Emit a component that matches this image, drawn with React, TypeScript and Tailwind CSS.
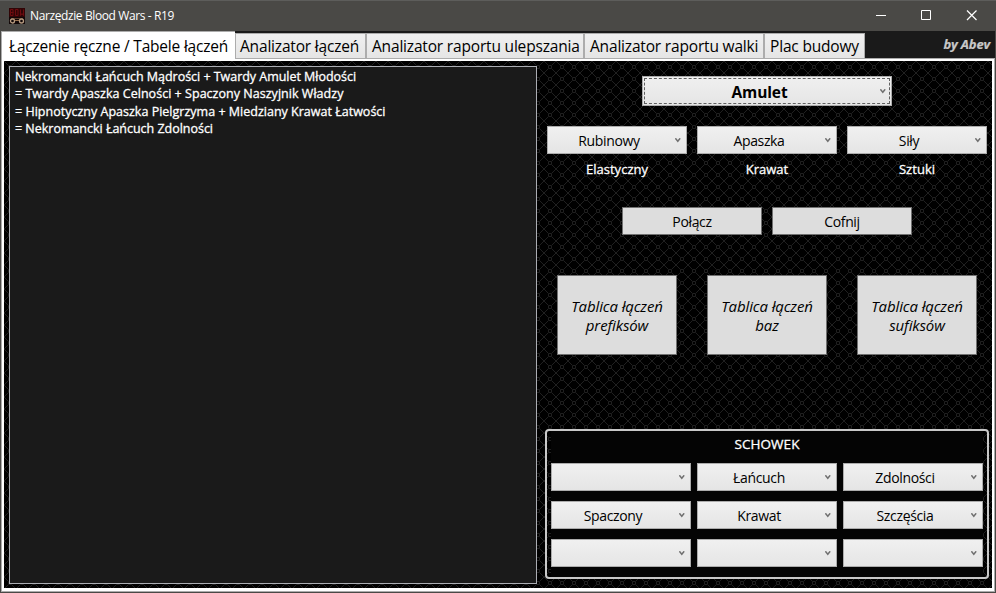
import React from "react";

function Chevron() {
  return (
    <svg className="block h-[5px] w-[6px] shrink-0" viewBox="0 0 6 5">
      <path d="M0.4 0.3 L2.8 3.3 L5.2 0.3" fill="none" stroke="#707070" strokeWidth="1.5" />
    </svg>
  );
}

function Combo({ label }: { label?: string }) {
  return (
    <div className="flex h-7 w-[140px] border border-[#acacac] bg-linear-to-b from-[#f0f0f0] to-[#e5e5e5]">
      <div className="flex flex-1 items-center justify-center pt-[2px] pr-px text-[14px] leading-5 tracking-[-0.35px] text-black">
        {label}
      </div>
      <div className="w-[15px] pt-[11px] pl-1">
        <Chevron />
      </div>
    </div>
  );
}

function PushButton({ children }: { children: React.ReactNode }) {
  return (
    <button className="h-7 w-[140px] border border-[#707070] bg-[#dddddd] pt-px text-[14px] leading-5 tracking-[-0.35px] text-black">
      {children}
    </button>
  );
}

function TableButton({ second }: { second: string }) {
  return (
    <button className="h-20 w-[120px] border border-[#707070] bg-[#dddddd] pt-[2px] text-[15px] leading-[19px] tracking-[-0.12px] text-black italic">
      Tablica łączeń
      <br />
      {second}
    </button>
  );
}

const tabs = [
  { label: "Analizator łączeń", box: "w-[131px] pl-[4px]" },
  { label: "Analizator raportu ulepszania", box: "w-[218px] pl-[5px]" },
  { label: "Analizator raportu walki", box: "w-[180px] pl-[5px]" },
  { label: "Plac budowy", box: "w-[101px] pl-[5px]" },
];

const log = [
  { text: "Nekromancki Łańcuch Mądrości + Twardy Amulet Młodości", track: "tracking-[-0.03px]" },
  { text: "= Twardy Apaszka Celności + Spaczony Naszyjnik Władzy", track: "tracking-[0.03px]" },
  { text: "= Hipnotyczny Apaszka Pielgrzyma + Miedziany Krawat Łatwości", track: "tracking-[0.01px]" },
  { text: "= Nekromancki Łańcuch Zdolności", track: "tracking-[-0.02px]" },
];

export default function App() {
  return (
    <div className="flex h-[593px] w-[996px] flex-col overflow-hidden bg-[#4a4946] font-['Open_Sans','Noto_Sans',sans-serif] text-black">
      <header className="flex h-[31px] shrink-0 items-center border-t border-[#5d5d5b] pl-[9px] text-white">
        <svg className="h-4 w-4" viewBox="0 0 16 16">
          <rect width="16" height="16" fill="#120808" />
          <rect width="16" height="9" fill="#300506" />
          <path d="M1.500 1.500h2.500v6h-2.500zM1.500 4.500h3M6.500 1.500h2.500v6h-2.500zM11.500 1.500v6l1.500-2 1.500 2v-6" fill="none" stroke="#6e0c0f" />
          <path d="M2 10.500h12" stroke="#5d3d2a" />
          <circle cx="3.500" cy="13" r="2" fill="none" stroke="#b69b80" strokeWidth="1.300" />
          <circle cx="12.500" cy="13" r="2" fill="none" stroke="#b69b80" strokeWidth="1.300" />
          <path d="M6 12.500h4" stroke="#97714f" />
        </svg>
        <span className="ml-[5px] flex-1 text-[12px] tracking-[-0.39px] whitespace-nowrap">Narzędzie Blood Wars - R19</span>
        <svg className="h-[30px] w-[120px]" viewBox="0 0 120 30" fill="none" stroke="white">
          <path d="M0 14.500h10M45.500 9.500h9v9h-9z" />
          <path d="M91 9.500l9.500 9.500M100.500 9.500l-9.500 9.500" strokeWidth="1.200" />
        </svg>
      </header>
      <div className="mr-px ml-px flex h-[28px] shrink-0 bg-[#1a1a1a]">
        <div className="h-[28px] w-[234px] border-t border-l border-[#acacac] bg-white pt-[3px] pl-[7px] text-[15.5px] leading-[22px] tracking-[-0.2px] whitespace-nowrap">
          Łączenie ręczne / Tabele łączeń
        </div>
        <div className="flex flex-1 border-b border-[#acacac] pt-[2px]">
          {tabs.map((t) => (
            <div
              key={t.label}
              className={`flex h-[26px] items-center border border-[#acacac] bg-linear-to-b from-[#f0f0f0] to-[#e5e5e5] pt-px text-[15.5px] tracking-[-0.18px] whitespace-nowrap ${t.box}`}
            >
              {t.label}
            </div>
          ))}
          <div className="flex-1 pt-[2px] pr-[5px] text-right text-[13px] leading-[18px] font-bold tracking-[-0.15px] text-[#c8c8c8] italic [-webkit-text-stroke:0.2px_#c8c8c8]">
            by Abev
          </div>
        </div>
      </div>
      <main className="mr-px mb-px ml-px flex min-h-0 flex-1 border-r border-b border-l border-[#acacac] bg-white pt-[2px] pr-[2px] pb-[3px] pl-[2px]">
        <div className="relative isolate flex min-w-0 flex-1 bg-black">
          <svg className="absolute inset-0 -z-10 h-full w-full">
            <defs>
              <pattern id="mesh" width="12" height="12" patternUnits="userSpaceOnUse">
                <path
                  d="M0 .5h1M1 1.5h1M2 2.5h1M3 3.5h1M11 .5h1M10 1.5h1M9 2.5h1M8 3.5h1M0 11.5h1M1 10.5h1M2 9.5h1M3 8.5h1M11 11.5h1M10 10.5h1M9 9.5h1M8 8.5h1M4.5 4.5h3v3h-3z"
                  stroke="#202020"
                  fill="none"
                />
              </pattern>
            </defs>
            <rect width="100%" height="100%" fill="url(#mesh)" />
          </svg>
          <section className="mt-[5px] mb-1 ml-[5px] w-[528px] border border-[#abadb3] bg-[#1a1a1a] pt-px pl-[5px] text-[12.5px] leading-[17.3px] text-white [-webkit-text-stroke:0.3px_white]">
            {log.map((l) => (
              <p key={l.text} className={`whitespace-nowrap ${l.track}`}>{l.text}</p>
            ))}
          </section>
          <section className="ml-2 flex w-[444px] flex-col items-center pt-[15px]">
            <div className="h-[30px] w-[250px] border border-[#acacac] bg-linear-to-b from-[#f0f0f0] to-[#e5e5e5] p-px">
              <div className="flex h-full border border-dashed border-[#606060]">
                <div className="flex flex-1 items-center justify-center pt-1 pr-[2px] text-[15.5px] font-bold tracking-[-0.1px]">Amulet</div>
                <div className="w-[13px] pt-[10px] pl-1">
                  <Chevron />
                </div>
              </div>
            </div>
            <div className="mt-5 flex gap-[10px]">
              <Combo label="Rubinowy" />
              <Combo label="Apaszka" />
              <Combo label="Siły" />
            </div>
            <div className="mt-[6px] flex gap-[10px] text-center text-[13px] leading-[18px] tracking-[0.02px] text-white [-webkit-text-stroke:0.3px_white]">
              <span className="w-[140px]">Elastyczny</span>
              <span className="w-[140px]">Krawat</span>
              <span className="w-[140px]">Sztuki</span>
            </div>
            <div className="mt-[29px] flex gap-[10px]">
              <PushButton>Połącz</PushButton>
              <PushButton>Cofnij</PushButton>
            </div>
            <div className="mt-10 flex gap-[30px]">
              <TableButton second="prefiksów" />
              <TableButton second="baz" />
              <TableButton second="sufiksów" />
            </div>
            <div className="mt-[74px] h-[150px] w-[444px] rounded-[4px] border-2 border-[#c8c8c8] px-1">
              <div className="h-full bg-[#040404]">
                <h2 className="h-8 pt-[3px] text-center text-[13.5px] leading-[20px] tracking-[0.05px] text-white [-webkit-text-stroke:0.3px_white]">
                  SCHOWEK
                </h2>
                <div className="grid grid-cols-[140px_140px_140px] gap-x-[6px] gap-y-[10px]">
                  <Combo />
                  <Combo label="Łańcuch" />
                  <Combo label="Zdolności" />
                  <Combo label="Spaczony" />
                  <Combo label="Krawat" />
                  <Combo label="Szczęścia" />
                  <Combo />
                  <Combo />
                  <Combo />
                </div>
              </div>
            </div>
          </section>
        </div>
      </main>
    </div>
  );
}
